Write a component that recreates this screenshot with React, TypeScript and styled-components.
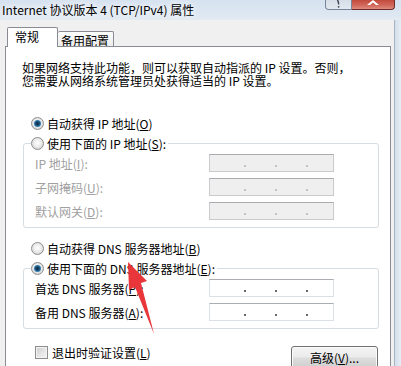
import React from "react";
import styled, { createGlobalStyle } from "styled-components";

const GlobalStyle = createGlobalStyle`
  html, body {
    margin: 0;
    padding: 0;
    background: #f0f0f0;
  }
  body {
    font-family: "Noto Sans CJK SC", "Liberation Sans", sans-serif;
    font-size: 12px;
    color: #000;
  }
`;

const Window = styled.div`
  position: relative;
  width: 401px;
  height: 366px;
  overflow: hidden;
  display: flex;
  flex-direction: column;
  background: #f0f0f0;
`;

const TitleBar = styled.div`
  flex: none;
  height: 20px;
  display: flex;
  align-items: flex-start;
  padding-right: 6px;
  background: linear-gradient(180deg, #d6e2f0 0%, #dde7f2 70%, #e3eaf2 100%);
`;

const Title = styled.div`
  flex: 1;
  align-self: center;
  padding-left: 2px;
  line-height: 20px;
  font-size: 12px;
  white-space: nowrap;
  text-shadow: 0 0 6px #fff, 0 0 10px #fff;
`;

const CaptionButton = styled.div<{ $close?: boolean }>`
  box-sizing: border-box;
  width: ${(p) => (p.$close ? 43 : 27)}px;
  height: 10px;
  display: flex;
  justify-content: center;
  align-items: flex-start;
  overflow: hidden;
  border: 1px solid ${(p) => (p.$close ? "#6e2b25" : "#76859a")};
  border-top: none;
  border-left: ${(p) => (p.$close ? "none" : undefined)};
  border-radius: ${(p) => (p.$close ? "0 0 4px 0" : "0 0 0 4px")};
  background: ${(p) =>
    p.$close
      ? "linear-gradient(180deg, #c24a3e 0%, #d2685c 60%, #e08c80 100%)"
      : "linear-gradient(180deg, #d5dde7 0%, #e3e9f0 100%)"};
`;

const Main = styled.div`
  flex: 1;
  min-height: 0;
  display: flex;
`;

const Body = styled.div`
  flex: 1;
  min-width: 0;
  display: flex;
  flex-direction: column;
  padding: 0 3px 0 5px;
`;

const FrameEdge = styled.div`
  flex: none;
  width: 6px;
  border-left: 1px solid #a7b4c3;
  background: linear-gradient(90deg, #d4dfeb 0%, #e6edf5 100%);
`;

const TabStrip = styled.div`
  display: flex;
  align-items: flex-end;
  height: 20px;
  margin-top: 7px;
  padding-left: 2px;
`;

const Tab = styled.div<{ $active?: boolean }>`
  box-sizing: border-box;
  display: flex;
  align-items: center;
  height: ${(p) => (p.$active ? 20 : 15)}px;
  margin-bottom: ${(p) => (p.$active ? 0 : 1)}px;
  padding: ${(p) => (p.$active ? "0 0 2px 7px" : "3px 0 0 3px")};
  width: ${(p) => (p.$active ? 51 : 56)}px;
  border: 1px solid #898c95;
  border-bottom: none;
  border-left: ${(p) => (p.$active ? undefined : "none")};
  border-radius: 2px 2px 0 0;
  background: ${(p) =>
    p.$active ? "#fff" : "linear-gradient(180deg, #fdfdfd 0%, #ececec 100%)"};
  position: ${(p) => (p.$active ? "relative" : "static")};
  z-index: ${(p) => (p.$active ? 1 : "auto")};
  white-space: nowrap;
`;

const Panel = styled.div`
  flex: 1;
  margin-top: -1px;
  display: flex;
  flex-direction: column;
  padding: 14px 11px 0 16px;
  background: #fff;
  border: 1px solid #898c95;
  border-bottom: none;
`;

const Intro = styled.p`
  margin: 0;
  line-height: 13px;
  white-space: nowrap;
`;

const Choice = styled.label<{ $indent?: number }>`
  display: flex;
  align-items: center;
  gap: 3px;
  height: 20px;
  padding-left: ${(p) => p.$indent ?? 0}px;
  padding-right: 2px;
  white-space: nowrap;
`;

const RadioMark = styled.span<{ $checked?: boolean }>`
  flex: none;
  box-sizing: border-box;
  width: 13px;
  height: 13px;
  border-radius: 50%;
  border: 1px solid #8d8d8d;
  background: radial-gradient(circle at 50% 45%, #ffffff 0%, #ececec 45%, #c8c8c8 100%);
  display: flex;
  align-items: center;
  justify-content: center;

  &::after {
    content: "";
    display: ${(p) => (p.$checked ? "block" : "none")};
    width: 7px;
    height: 7px;
    border-radius: 50%;
    background: radial-gradient(circle at 50% 50%, #0c2740 0%, #1c4f78 40%, #4a9fd4 80%, #a6d6f2 100%);
  }
`;

const CheckMark = styled.span`
  flex: none;
  box-sizing: border-box;
  width: 13px;
  height: 13px;
  border: 1px solid #8d8d8d;
  background: linear-gradient(135deg, #cbcbcb 0%, #e6e6e6 55%, #f6f6f6 100%);
  box-shadow: inset 0 0 0 1px #f4f4f4;
`;

const Group = styled.fieldset<{ $gap: number }>`
  margin: ${(p) => p.$gap}px 0 0 1px;
  padding: 1px 10px 7px 11px;
  border: 1px solid #d5dce2;
  border-radius: 3px;
  min-width: 0;
`;

const GroupLegend = styled.legend`
  padding: 0;
  margin-left: -4px;
`;

const Fields = styled.div<{ $disabled?: boolean }>`
  display: grid;
  grid-template-columns: 174px 125px;
  grid-auto-rows: 18px;
  row-gap: 6px;
  align-items: center;
  color: ${(p) => (p.$disabled ? "#a0a0a0" : "#000")};
  white-space: nowrap;
`;

const IpBox = styled.div<{ $disabled?: boolean }>`
  box-sizing: border-box;
  height: 18px;
  display: flex;
  align-items: flex-end;
  gap: 29px;
  padding: 0 0 4px 34px;
  border: 1px solid ${(p) => (p.$disabled ? "#c9cbce" : "#dbdfe6")};
  border-top-color: ${(p) => (p.$disabled ? "#a9abae" : "#abadb3")};
  background: ${(p) => (p.$disabled ? "#efefef" : "#fff")};
`;

const IpDot = styled.span<{ $disabled?: boolean }>`
  width: 2px;
  height: 2px;
  background: ${(p) => (p.$disabled ? "#c4c4c4" : "#6a6a6a")};
`;

const Footer = styled.div`
  display: flex;
  justify-content: space-between;
  align-items: flex-start;
  margin-top: 17px;
  padding: 0 1px 0 13px;
`;

const CheckLabel = styled.label`
  display: flex;
  align-items: center;
  gap: 4px;
  height: 13px;
  white-space: nowrap;
`;

const PushButton = styled.button`
  box-sizing: border-box;
  width: 87px;
  height: 23px;
  padding: 0;
  border: 1px solid #707070;
  border-radius: 3px;
  background: linear-gradient(180deg, #f4f4f4 0%, #ebebeb 48%, #dddddd 52%, #cfcfcf 100%);
  box-shadow: inset 0 0 0 1px #fbfbfb;
  font: 12px "Noto Sans CJK SC", "Liberation Sans", sans-serif;
  color: #000;
`;

const Pointer = styled.svg`
  position: absolute;
  left: 0;
  top: 0;
  pointer-events: none;
`;

const IpField = ({ disabled }: { disabled?: boolean }) => (
  <IpBox $disabled={disabled}>
    <IpDot $disabled={disabled} />
    <IpDot $disabled={disabled} />
    <IpDot $disabled={disabled} />
  </IpBox>
);

const Radio = ({
  checked,
  indent,
  children,
}: {
  checked?: boolean;
  indent?: number;
  children: React.ReactNode;
}) => (
  <Choice $indent={indent}>
    <RadioMark $checked={checked} />
    <span>{children}</span>
  </Choice>
);

export default function App() {
  return (
    <>
      <GlobalStyle />
      <Window>
        <TitleBar>
          <Title>Internet 协议版本 4 (TCP/IPv4) 属性</Title>
          <CaptionButton>
            <svg width="8" height="8" viewBox="0 0 8 8">
              <path d="M2.5 0 Q4 3 3.5 4.5" fill="none" stroke="#3b4450" strokeWidth="1.4" />
              <circle cx="3.6" cy="6.8" r="0.9" fill="#3b4450" />
            </svg>
          </CaptionButton>
          <CaptionButton $close>
            <svg width="14" height="6" viewBox="0 0 14 6">
              <path d="M1 5 L7 0 L13 5 L10 5 L7 2.5 L4 5 Z" fill="#fff" />
            </svg>
          </CaptionButton>
        </TitleBar>
        <Main>
          <Body>
            <TabStrip>
              <Tab $active>常规</Tab>
              <Tab>备用配置</Tab>
            </TabStrip>
            <Panel>
              <Intro>
                如果网络支持此功能，则可以获取自动指派的 IP 设置。否则，
                <br />
                您需要从网络系统管理员处获得适当的 IP 设置。
              </Intro>

              <div style={{ height: 26 }} />
              <Radio checked indent={9}>
                自动获得 IP 地址(<u>O</u>)
              </Radio>
              <Group $gap={0}>
                <GroupLegend>
                  <Radio>
                    使用下面的 IP 地址(<u>S</u>):
                  </Radio>
                </GroupLegend>
                <Fields $disabled>
                  <span>IP 地址(<u>I</u>):</span>
                  <IpField disabled />
                  <span>子网掩码(<u>U</u>):</span>
                  <IpField disabled />
                  <span>默认网关(<u>D</u>):</span>
                  <IpField disabled />
                </Fields>
              </Group>

              <div style={{ height: 10 }} />
              <Radio indent={9}>
                自动获得 DNS 服务器地址(<u>B</u>)
              </Radio>
              <Group $gap={0}>
                <GroupLegend>
                  <Radio checked>
                    使用下面的 DNS 服务器地址(<u>E</u>):
                  </Radio>
                </GroupLegend>
                <Fields>
                  <span>首选 DNS 服务器(<u>P</u>):</span>
                  <IpField />
                  <span>备用 DNS 服务器(<u>A</u>):</span>
                  <IpField />
                </Fields>
              </Group>

              <Footer>
                <CheckLabel>
                  <CheckMark />
                  <span>退出时验证设置(<u>L</u>)</span>
                </CheckLabel>
                <PushButton>
                  高级(<u>V</u>)...
                </PushButton>
              </Footer>
            </Panel>
          </Body>
          <FrameEdge />
        </Main>
        <Pointer width="401" height="366" viewBox="0 0 401 366">
          <polygon
            points="128,262 147,281 141,283 154,334 135,287 129,290"
            fill="#e8363a"
          />
        </Pointer>
      </Window>
    </>
  );
}
